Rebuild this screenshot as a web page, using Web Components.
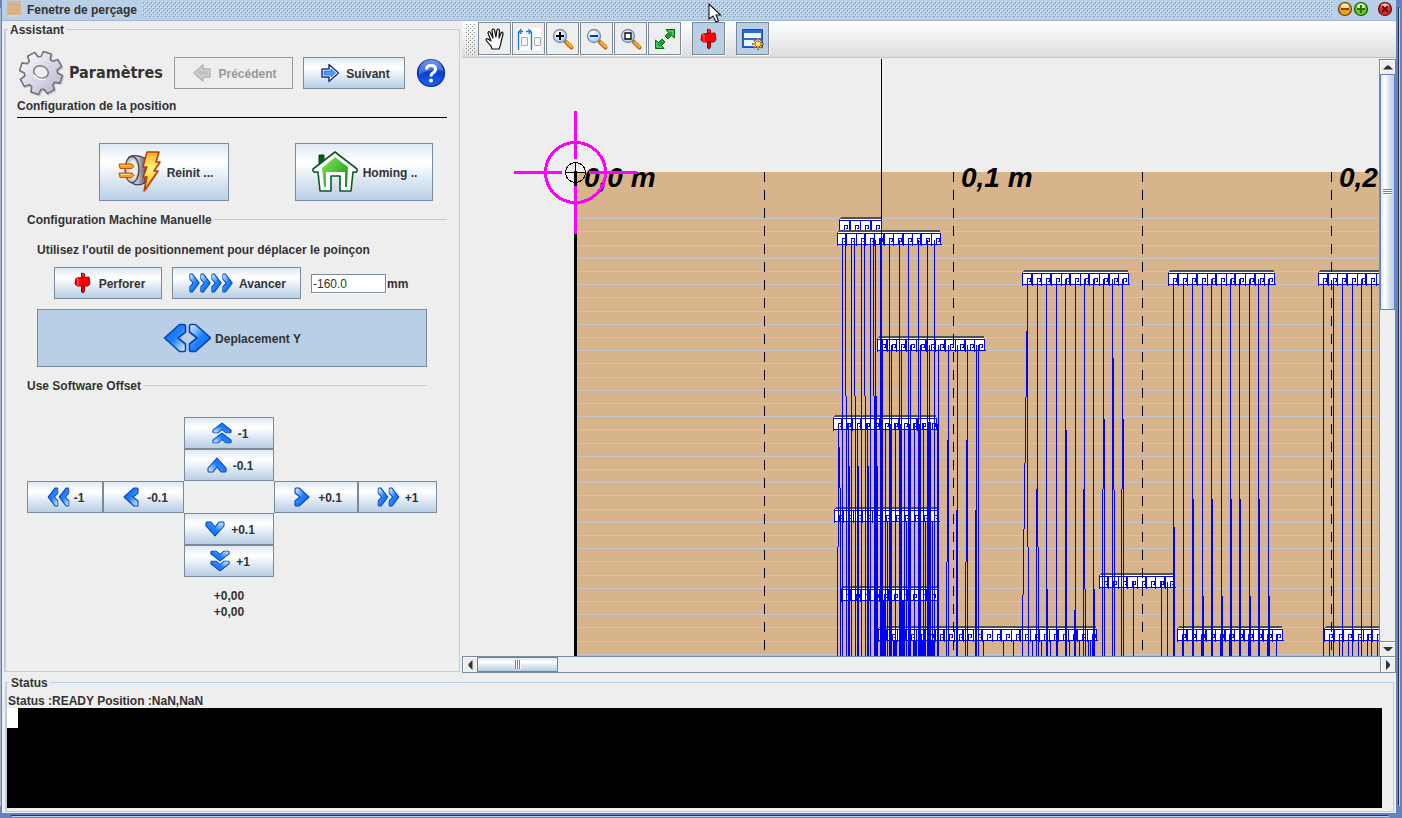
<!DOCTYPE html>
<html lang="fr">
<head>
<meta charset="utf-8">
<title>Fenetre de perçage</title>
<style>
  html, body { margin: 0; height: 100%; background: #eee; }
  body { font: bold 12px/16px "Liberation Sans", Arial, sans-serif; color: #333; }
</style>
</head>
<body>
<drill-window></drill-window>

<script>
/* ---------- icons ---------- */
const blueGrad = `<linearGradient id="b" x1="0" y1="0" x2="1" y2="1"><stop offset="0" stop-color="#e4f4ff"/><stop offset=".3" stop-color="#6db4ff"/><stop offset=".5" stop-color="#1f80ff"/><stop offset="1" stop-color="#0a6cf8"/></linearGradient>`;
const chev = (x, y, rot = 0, sx = 1, sy = 1) =>
  `<path transform="translate(${x} ${y}) rotate(${rot}) scale(${sx} ${sy})" d="M-7-8Q-7-9-6-9L-3-9L7 0L-3 9L-6 9Q-7 9-7 8L-7 4L-2 0L-7-4Z" fill="url(#b)" stroke="#0c40b4" stroke-width="1.1" stroke-linejoin="round"/>`;
const lens = inner => `<defs><radialGradient id="l" cx=".4" cy=".3" r=".8"><stop offset="0" stop-color="#fff"/><stop offset="1" stop-color="#8fc3f5"/></radialGradient></defs>
  <path d="M14.500 14.500L20.500 20.500" stroke="#b8641c" stroke-width="4" stroke-linecap="round"/><path d="M15 14.500L20.500 20" stroke="#ffb029" stroke-width="2.200" stroke-linecap="round"/><path d="M13 13L15 15" stroke="#777" stroke-width="2"/>
  <circle cx="9" cy="9" r="6.500" fill="url(#l)" stroke="#7b8ba6" stroke-width="1.300"/>${inner}`;
const pin = `<path d="M10.500 2L13.500 3V6H10.500Z" fill="#e33" stroke="#a00"/><path d="M5 7L18 6L19 13L17 15H6L4 13Z" fill="#f00" stroke="#b40000"/><path d="M5 7L7 8V15" fill="none" stroke="#ff7070"/><path d="M10.500 15.500H13.500V20L12 22L10.500 21Z" fill="#e00" stroke="#8c0000"/>`;
const arrowR = (fill, line, mid) => `<path d="M4 8H11V3.500L20.500 12L11 20.500V16H4Z" fill="#fff" stroke="${line}" stroke-width="1.500" stroke-linejoin="round"/><path d="M6 10H13V8L17.500 12L13 16V14H6Z" fill="${fill}" stroke="${mid}" stroke-width=".8"/>`;
const gearPath = (() => {
  let d = '';
  for (let i = 0; i < 8; i++) {
    [[-.3, 16.5], [-.19, 21.500], [.19, 21.500], [.3, 16.5]].forEach(([o, r], k) => {
      const t = i * Math.PI / 4 + o + .3;
      d += (i + k ? 'L' : 'M') + (24 + r * Math.cos(t)).toFixed(1) + ' ' + (24 + r * Math.sin(t)).toFixed(1);
    });
  }
  return d + 'Z';
})();
const ICONS = {
  gear: [48, 48, `<defs><linearGradient id="g" x1="0" y1="0" x2="1" y2="1"><stop offset="0" stop-color="#fff"/><stop offset="1" stop-color="#b4b4cc"/></linearGradient></defs>
    <path transform="translate(1 1)" d="${gearPath}" fill="#bbb" stroke="#ccc" stroke-width="2" stroke-linejoin="round"/>
    <path d="${gearPath}" fill="url(#g)" stroke="#73737f" stroke-width="1.600" stroke-linejoin="round"/>
    <ellipse cx="24" cy="23" rx="7.500" ry="6" transform="rotate(20 24 23)" fill="#eee" stroke="#77778a" stroke-width="1.500"/><path d="M17 26Q21 32 29 30" fill="none" stroke="#fff" stroke-width="1.500"/>`],
  prev: [24, 24, `<g transform="matrix(-1 0 0 1 24 0)"><path d="M4 8H11V4L20 12L11 20V16H4Z" fill="#d4d4d4" stroke="#b4b4b4" stroke-width="1.500" stroke-linejoin="round"/><path d="M6 10H13V8L17 12L13 16V14H6Z" fill="#c2c2c2"/></g>`],
  next: [24, 24, arrowR('#48a0ff', '#1c2f96', '#1c62d8')],
  help: [32, 32, `<defs><linearGradient id="h" x1="0" y1="0" x2="0" y2="1"><stop offset="0" stop-color="#3c7df0"/><stop offset=".5" stop-color="#0b3fd0"/><stop offset="1" stop-color="#1c66f4"/></linearGradient></defs>
    <circle cx="16" cy="16" r="13.500" fill="url(#h)" stroke="#0a2a96" stroke-width="1.200"/><path d="M4 14A12 12 0 0 1 28 14Q16 10 4 18Z" fill="#fff" opacity=".22"/>
    <path d="M11.500 12.500Q11.500 8.500 16 8.500T20.500 12Q20.500 14.500 18 16Q16 17 16 19.500" fill="none" stroke="#fff" stroke-width="3"/><circle cx="16" cy="23.500" r="2" fill="#fff"/>`],
  plug: [48, 48, `<defs><linearGradient id="p" x1="0" y1="0" x2="1" y2="0"><stop offset="0" stop-color="#f4f4f8"/><stop offset=".6" stop-color="#b4b4c4"/><stop offset="1" stop-color="#65656f"/></linearGradient><linearGradient id="y" x1="0" y1="0" x2="0" y2="1"><stop offset="0" stop-color="#ffb020"/><stop offset=".4" stop-color="#fff27a"/><stop offset="1" stop-color="#ffb400"/></linearGradient></defs>
    <path d="M14 9Q20 6 30 10V35Q21 39 16 34Z" fill="url(#p)" stroke="#44444e" stroke-width="1.200"/>
    <ellipse cx="17" cy="21.500" rx="7" ry="13" fill="#c9c9d6" stroke="#444" stroke-width="1.300"/><ellipse cx="18" cy="21.500" rx="4.500" ry="9.500" fill="#eee"/>
    <path d="M4 16H17L19 18.500L17 20.500H5Z M4 25H17L19 27.500L17 29.500H5Z" fill="#ffa01c" stroke="#bf5300"/><path d="M6 17.500H15M6 26.500H15" stroke="#ffe27a"/>
    <path d="M32 5H45L41 15H46L38 25H43L30 45L33 30H28L32 21H28Z" fill="#888" opacity=".5"/>
    <path d="M32 4H44L41 14H45L39 23H43L29 43L32 29H28L32 19H28Z" fill="url(#y)" stroke="#c03a00" stroke-width="1.500" stroke-linejoin="round"/>`],
  home: [48, 48, `<defs><linearGradient id="r" x1="0" y1="0" x2="1" y2="1"><stop offset="0" stop-color="#8be85c"/><stop offset="1" stop-color="#07930c"/></linearGradient></defs>
    <path d="M8 7H13V15L8 19Z" fill="#045a24" stroke="#034018"/>
    <path d="M24 4L46 21Q47 25 42 24L40 43H29V28H20V43H9L7 24Q1 25 2 21Z" fill="#fff" stroke="#0b5a24" stroke-width="1.600" stroke-linejoin="round"/>
    <path d="M24 9L37 19L36 39H34V24H15V39H13L11 20Z" fill="url(#r)"/>`],
  pin: [24, 24, pin],
  adv: [48, 24, `<defs>${blueGrad}</defs>` + [7.5, 18.5, 29.5, 40.5].map(x => chev(x, 12, 0, .68, 1)).join('')],
  depY: [48, 32, `<defs>${blueGrad}</defs>` + chev(12, 16, 180, 1.5, 1.5) + chev(37, 16, 0, 1.5, 1.5)],
  up2: [24, 24, `<defs>${blueGrad}</defs>` + chev(12, 7, -90, .7, 1) + chev(12, 17, -90, .7, 1)],
  up: [24, 24, `<defs>${blueGrad}</defs>` + chev(12, 12, -90)],
  down: [24, 24, `<defs>${blueGrad}</defs>` + chev(12, 12, 90)],
  down2: [24, 24, `<defs>${blueGrad}</defs>` + chev(12, 7, 90, .7, 1) + chev(12, 17, 90, .7, 1)],
  left: [24, 24, `<defs>${blueGrad}</defs>` + chev(12, 12, 180)],
  left2: [24, 24, `<defs>${blueGrad}</defs>` + chev(7, 12, 180, .7, 1) + chev(18, 12, 180, .7, 1)],
  right: [24, 24, `<defs>${blueGrad}</defs>` + chev(12, 12)],
  right2: [24, 24, `<defs>${blueGrad}</defs>` + chev(6, 12, 0, .7, 1) + chev(17, 12, 0, .7, 1)],
  hand: [24, 24, `<path d="M9 22L8 19Q5 16 3 13Q3 11 5 12L8 14L5 6Q5 4 7 5L10 11L9 3Q10 1 11.500 3L13 10L14 3Q15 1 16.500 3L16 11L18 6Q20 4 20 7L18 15Q18 18 16 22Z" fill="#fff" stroke="#111" stroke-width="1.200" stroke-linejoin="round"/>`],
  dist: [24, 24, `<path fill="#fff" d="M0 1H24V23H0Z"/><path d="M1.500 5V23M14.500 5V23" stroke="#1478f0" stroke-width="1.400"/><path d="M2 4.500H6M9 4.500H14M4.500 2L2 4.500L4.500 7M11.500 2L14 4.500L11.500 7" fill="none" stroke="#1478f0" stroke-width="1.300"/><path d="M4.500 10.500H10.500V18.500H4.500ZM17.500 10.500H23.500V18.500H17.500Z" fill="#f6f6f6" stroke="#aaa"/>`],
  zin: [24, 24, lens('<path d="M5 9H13M9 5V13" stroke="#000" stroke-width="2"/>')],
  zout: [24, 24, lens('<path d="M5 9H13" stroke="#10389c" stroke-width="2"/>')],
  zbox: [24, 24, lens('<path d="M6 6H12V12H6Z" fill="#fff" stroke="#000" stroke-width="1.300"/>')],
  fit: [24, 24, `<path d="M13 2.500H21.500V11L18.500 8.500L15 12L12 9L15.500 5.500Z" fill="#19a22c" stroke="#0a6a18"/><path d="M2.500 13V21.500H11L8.500 18.500L12 15L9 12L5.500 15.500Z" fill="#19a22c" stroke="#0a6a18"/><path d="M15 4H20V9M4 15V20H9" fill="none" stroke="#7fe08a"/>`],
  form: [24, 24, `<path d="M1.500 2.500H21.500V20.500H1.500Z" fill="#2868d8" stroke="#1b4cae"/><path d="M3 6H20V11H3ZM3 13H20V19H3Z" fill="#f0f6ff"/><path d="M17 11V23M11 17H23M13 13L21 21M21 13L13 21" stroke="#a8641a" stroke-width="2"/><path d="M17 12V22M12 17H22M14 14L20 20M20 14L14 20" stroke="#ffc74a"/><circle cx="17" cy="17" r="2" fill="#fff3b0"/>`],
  board: [16, 16, `<path fill="#d9b38c" d="M0 0H14V14H0Z"/><path d="M1 3H6M8 4H13M2 8H5M7 9H12M1 12H9" stroke="#cfa67c"/><path d="M0 15H14" stroke="#eadcc8"/>`],
  min: [16, 16, `<circle cx="8" cy="8" r="6.500" fill="#e8a020" stroke="#6a3a10" stroke-width="1.200"/><ellipse cx="8" cy="5" rx="4" ry="2.500" fill="#fff0a0"/><path d="M4 8H12" stroke="#a33a00" stroke-width="2"/>`],
  max: [16, 16, `<circle cx="8" cy="8" r="6.500" fill="#6cc62c" stroke="#1f4a10" stroke-width="1.200"/><ellipse cx="8" cy="5" rx="4" ry="2.500" fill="#e0ffb0"/><path d="M4 8H12M8 4V12" stroke="#1f7a00" stroke-width="2"/>`],
  close: [16, 16, `<circle cx="8" cy="8" r="6.500" fill="#cc3030" stroke="#601010" stroke-width="1.200"/><ellipse cx="8" cy="5" rx="4" ry="2.500" fill="#ffb8b0"/><path d="M5 5L11 11M11 5L5 11" stroke="#700" stroke-width="2"/>`],
  cursor: [16, 24, `<path d="M1 1V16L5 13L8 19L10.500 18L8 12H12.500Z" fill="#fff" stroke="#111" stroke-width="1.100"/>`]
};

class MetalIcon extends HTMLElement {
  connectedCallback() {
    if (this.shadowRoot) return;
    const [w, h, body] = ICONS[this.getAttribute('name')];
    this.attachShadow({ mode: 'open' }).innerHTML =
      `<style>:host{display:inline-block;flex:none;line-height:0}svg{display:block}</style>
       <svg width="${w}" height="${h}" viewBox="0 0 ${w} ${h}" aria-hidden="true">${body}</svg>`;
  }
}
customElements.define('metal-icon', MetalIcon);

/* ---------- push button: icon attribute + label slot ---------- */
class MetalButton extends HTMLElement {
  connectedCallback() {
    if (this.shadowRoot) return;
    const off = this.hasAttribute('disabled') ? 'disabled' : '';
    const label = this.getAttribute('label');
    this.attachShadow({ mode: 'open' }).innerHTML = `
      <style>
        :host { display: block; height: 32px; }
        :host([tall]) { height: 58px; }
        button { box-sizing: border-box; width: 100%; height: 100%; margin: 0; padding: 0; display: flex; align-items: center; justify-content: center; gap: 4px;
          font: inherit; color: inherit; white-space: nowrap; border: 1px solid #7a8a99; background: linear-gradient(#dde8f3, #fff 30%, #fff 34%, #dce7f2 65%, #b8cfe5); }
        button:disabled { background: #eee; color: #999; border-color: #999; }
        span { padding-top: 2px; }
        :host([pressed]) button { background: #b8cfe5; }
        :host([tool]) { width: 34px; height: 34px; flex: none; }
        :host([tool]) button { width: 33px; height: 33px; background: #eee; box-shadow: 1px 1px #fff; }
        :host([tool][pressed]) button { background: #b8cfe5; }
        :host([flat]) button { border: 0; background: none; }
      </style>
      <button type="button" ${off} ${label ? `aria-label="${label}"` : ''}><metal-icon name="${this.getAttribute('icon')}"></metal-icon>${label ? '' : '<span><slot></slot></span>'}</button>`;
  }
}
customElements.define('metal-button', MetalButton);

/* ---------- titled border ---------- */
class MetalGroup extends HTMLElement {
  constructor() {
    super();
    this.attachShadow({ mode: 'open' }).innerHTML = `
      <style>
        :host { display: flex; min-width: 0; }
        fieldset { flex: 1; min-width: 0; box-sizing: border-box; margin: 0; padding: 0; border: 1px solid #b8cfe5; border-left-width: 2px; }
        legend { margin-left: 2px; padding: 0 2px; line-height: 16px; height: 14px; }
      </style>
      <fieldset><legend><slot name="legend"></slot></legend><slot></slot></fieldset>`;
  }
}
customElements.define('metal-group', MetalGroup);

/* ---------- section heading followed by a rule ---------- */
class MetalHeading extends HTMLElement {
  constructor() {
    super();
    this.attachShadow({ mode: 'open' }).innerHTML = `
      <style>
        :host { display: block; }
        h3 { margin: 0; font: inherit; line-height: 16px; height: 14px; display: flex; gap: 2px; white-space: nowrap; }
        h3::after { content: ""; flex: 1; height: 1px; margin-top: 7px; background: #b8cfe5; }
      </style><h3><slot></slot></h3>`;
  }
}
customElements.define('metal-heading', MetalHeading);

/* ---------- scroll bar ---------- */
class MetalScrollbar extends HTMLElement {
  connectedCallback() {
    if (this.shadowRoot) return;
    const v = this.hasAttribute('vertical');
    const arrow = d => `<svg width="10" height="10" viewBox="0 0 10 10" aria-hidden="true"><path d="${d}" fill="#333"/></svg>`;
    this.attachShadow({ mode: 'open' }).innerHTML = `
      <style>
        :host { display: grid; background: #eee; border: solid #7a8a99; ${v
          ? 'grid-template-rows: 14px 236px 1fr 15px; width: 15px; border-width: 1px 1px 0 1px;'
          : 'grid-template-columns: 14px 81px 1fr 16px; height: 15px; border-width: 1px 0 1px 1px;'} }
        button { margin: 0; padding: 0; display: flex; align-items: center; justify-content: center; background: #eee; border: 0; box-shadow: inset 1px 1px #fff; }
        .end { border: solid #7a8a99; border-width: ${v ? '1px 0 0' : '0 1px'}; }
        .thumb { border: 1px solid #6382bf; display: flex; align-items: center; justify-content: center; background: linear-gradient(${v ? 'to right' : 'to bottom'}, #dde8f3, #fff 30%, #dce7f2 60%, #b8cfe5); }
        .grip { ${v ? 'width: 9px; height: 6px' : 'width: 6px; height: 9px'}; background: repeating-linear-gradient(${v ? 'to bottom' : 'to right'}, #6382bf 0 1px, #fff 1px 2px); }
      </style>
      <button type="button" aria-label="Début">${arrow(v ? 'M0 7.500H10L6 3.500H4Z' : 'M7.500 0V10L3.500 6V4Z')}</button>
      <div class="thumb"><div class="grip"></div></div><div></div>
      <button class="end" type="button" aria-label="Fin">${arrow(v ? 'M0 3H10L6 7H4Z' : 'M3 0V10L7 6V4Z')}</button>`;
  }
}
customElements.define('metal-scrollbar', MetalScrollbar);

/* ---------- title bar ---------- */
const dots = (a, b) => `url("data:image/svg+xml,${encodeURIComponent(`<svg xmlns='http://www.w3.org/2000/svg' width='4' height='4' shape-rendering='crispEdges'><path fill='${a}' d='M0 0h1v1H0zM2 2h1v1H2z'/><path fill='${b}' d='M1 1h1v1H1zM3 3h1v1H3z'/></svg>`)}")`;
class MetalTitlebar extends HTMLElement {
  constructor() {
    super();
    this.attachShadow({ mode: 'open' }).innerHTML = `
      <style>
        :host { display: flex; align-items: center; height: 20px; background: #b8cfe5; border-bottom: 1px solid #9db8d8; padding: 0 3px 0 5px; }
        h1 { margin: 0 5px 0 4px; font: inherit; line-height: 18px; }
        metal-icon { margin-bottom: 2px; }
        .bumps { flex: 1; height: 16px; margin: 0 4px 2px 0; background: ${dots('#e4effa', '#6387dc')}; }
        button { margin: 0; padding: 0; border: 0; background: none; width: 16px; height: 19px; }
        .close { margin-left: 8px; }
      </style>
      <metal-icon name="board"></metal-icon><h1><slot></slot></h1><div class="bumps"></div>
      <button type="button" aria-label="Réduire"><metal-icon name="min"></metal-icon></button>
      <button type="button" aria-label="Agrandir"><metal-icon name="max"></metal-icon></button>
      <button class="close" type="button" aria-label="Fermer"><metal-icon name="close"></metal-icon></button>`;
  }
}
customElements.define('metal-titlebar', MetalTitlebar);

/* ---------- assistant form ---------- */
class DrillAssistant extends HTMLElement {
  constructor() {
    super();
    this.attachShadow({ mode: 'open' }).innerHTML = `
      <style>
        :host { display: block; padding: 13px 12px 0 11px; }
        .head { display: flex; align-items: center; height: 48px; gap: 10px; }
        .title { flex: 1; display: flex; align-items: center; gap: 4px; min-width: 0; white-space: nowrap; }
        h2 { margin: 0; font: bold 16px/24px "DejaVu Sans Condensed", "Noto Sans", sans-serif; }
        .sub { margin: 0; padding: 1px 0 3px; border-bottom: 1px solid #000; }
        .actions { display: flex; justify-content: space-between; margin-top: 25px; padding: 0 14px 0 82px; }
        .body { padding-left: 10px; }
        metal-heading { margin-top: 11px; }
        .inset { margin-right: 20px; }
        .manual { padding-left: 10px; margin-right: 20px; }
        .hint { margin: 16px 0 9px; white-space: nowrap; }
        .move { display: flex; align-items: center; gap: 10px; padding-left: 17px; margin-bottom: 10px; }
        .field { display: flex; align-items: center; gap: 1px; }
        label { padding-top: 2px; }
        input { box-sizing: border-box; width: 75px; height: 19px; margin: 0; padding: 1px 1px 0; font: 12px "Liberation Sans", Arial, sans-serif; color: #333; border: 1px solid #7a8a99; background: #fff; outline: 0; box-shadow: 1px 1px #fff; }
        .pad { display: grid; grid-template-columns: 76px 81px 90px 84px 79px; grid-auto-rows: 32px; margin-top: 25px; }
        .c { grid-column: 3; }
        .first { grid-column: 1; }
        .mid { grid-column: 4; }
        .out { grid-column: 3; margin-top: 11px; text-align: center; }
        output { display: block; }
        .w119 { width: 119px; } .w102 { width: 102px; } .w130 { width: 130px; } .w138 { width: 138px; } .w108 { width: 108px; } .w129 { width: 129px; }
      </style>
      <div class="head">
        <div class="title"><metal-icon name="gear"></metal-icon><h2>Paramètres</h2></div>
        <metal-button class="w119" icon="prev" disabled>Précédent</metal-button>
        <metal-button class="w102" icon="next">Suivant</metal-button>
        <metal-button flat icon="help" label="Aide"></metal-button>
      </div>
      <p class="sub">Configuration de la position</p>
      <div class="actions">
        <metal-button class="w130" tall icon="plug">Reinit ...</metal-button>
        <metal-button class="w138" tall icon="home">Homing ..</metal-button>
      </div>
      <div class="body">
        <metal-heading>Configuration Machine Manuelle</metal-heading>
        <div class="manual">
          <p class="hint">Utilisez l'outil de positionnement pour déplacer le poinçon</p>
          <div class="move">
            <metal-button class="w108" icon="pin">Perforer</metal-button>
            <metal-button class="w129" icon="adv">Avancer</metal-button>
            <div class="field"><input id="dist" type="text" value="-160.0"><label for="dist">mm</label></div>
          </div>
          <metal-button tall pressed icon="depY">Deplacement Y</metal-button>
        </div>
        <metal-heading class="inset">Use Software Offset</metal-heading>
        <div class="pad">
          <metal-button class="c" icon="up2">-1</metal-button>
          <metal-button class="c" icon="up">-0.1</metal-button>
          <metal-button class="first" icon="left2">-1</metal-button>
          <metal-button icon="left">-0.1</metal-button>
          <metal-button class="mid" icon="right">+0.1</metal-button>
          <metal-button icon="right2">+1</metal-button>
          <metal-button class="c" icon="down">+0.1</metal-button>
          <metal-button class="c" icon="down2">+1</metal-button>
          <div class="out"><output>+0,00</output><output>+0,00</output></div>
        </div>
      </div>`;
  }
}
customElements.define('drill-assistant', DrillAssistant);

/* ---------- toolbar ---------- */
class DrillToolbar extends HTMLElement {
  constructor() {
    super();
    this.attachShadow({ mode: 'open' }).innerHTML = `
      <style>
        :host { display: flex; height: 35px; padding: 1px 0 0 3px; background: linear-gradient(#fff, #ddd); border-bottom: 1px solid #c4c4c4; margin-bottom: 1px; }
        .grab { width: 10px; margin: 1px 3px 1px 0; background: ${dots('#fff', '#888')}; }
        i { width: 10px; }
      </style>
      <div class="grab"></div>
      <metal-button tool icon="hand" label="Déplacer"></metal-button><metal-button tool icon="dist" label="Distance"></metal-button>
      <metal-button tool icon="zin" label="Zoom avant"></metal-button><metal-button tool icon="zout" label="Zoom arrière"></metal-button>
      <metal-button tool icon="zbox" label="Zoom zone"></metal-button><metal-button tool icon="fit" label="Ajuster"></metal-button><i></i>
      <metal-button tool pressed icon="pin" label="Perforer"></metal-button><i></i>
      <metal-button tool pressed icon="form" label="Assistant"></metal-button>`;
  }
}
customElements.define('drill-toolbar', DrillToolbar);

/* ---------- punching plan (drawn in window units, shifted to the view origin) ---------- */
class DrillPlan extends HTMLElement {
  constructor() {
    super();
    let board = '';
    for (let n = 0; n < 60; n++) board += `<path d="M577 ${Math.floor(218.6 + 13.2 * n) + .5}H2400" stroke="#c4c4cc"/>`;
    /* pipe rows: left, right, top */
    const rows = [[839, 881, 217], [837, 940, 230], [877, 984, 336], [833, 936, 415], [834, 938, 507], [841, 937, 586], [878, 1096, 626], [1099, 1174, 573],
      [1022, 1128, 270], [1168, 1274, 270], [1318, 1424, 270], [1177, 1282, 626], [1324, 1430, 626]];
    const boxes = rows.map(([a, b, t]) => {
      let s = `<path d="M${a} ${t + 14}V${t + 2}L${a + 2} ${t}H${b}V${t + 14}Z" fill="#505050"/><path d="M${a + 1} ${t + 2}H${b}V${t + 14}H${a + 1}Z" fill="#fff"/>`;
      let p = `M${a + .5} ${t + 16}V${t + 3.5}H${b + .5}V${t + 15}M${a} ${t + 14.5}H${b + 2}`;
      const n = Math.round((b - a) / 9.5), st = (b - a) / n;
      for (let i = 0; i < n; i++) {
        const x = Math.round(a + i * st);
        if (i) p += `M${x + .5} ${t + 3}V${t + 16}`;
        if (i % 2) p += `M${x - .5} ${t + 3}V${t + 15}`;
        p += `M${x + 5.5} ${t + 15}V${t + 8.5}H${x + 8}V${t + 11}M${x + 7} ${t + 11.5}H${x + 9}`;
      }
      return s + `<path d="${p}" fill="none" stroke="#00f"/>`;
    }).join('');
    /* punch tracks: x, from, to, width */
    const B = 657, L = [];
    const add = (xs, a, b = B, w = 1) => xs.forEach(x => L.push([x, a, b, w]));
    add([845, 854, 864], 240, 396); add([846, 855, 865], 396);
    add([842, 851, 861, 870, 875, 889, 899, 908, 918, 927, 934], 240);
    add([873], 240, 396); add([874], 396, B, 3);
    add([881], 219); add([880], 238, B, 2); add([882], 340);
    add([891, 901, 910, 920, 929, 938, 976, 978], 345);
    add([948], 345, 562); add([947], 440, 562); add([946, 948], 562);
    add([967], 345, 562); add([966], 440, 562); add([965, 967], 562);
    add([957], 345); add([956, 975], 510);
    add([838], 424, 547); add([839], 447, 488); add([840], 488); add([837], 547);
    add([848, 857, 867, 885, 895, 904, 914, 923], 424);
    add([849, 858, 868, 877], 466);
    add([890, 900, 909, 919], 424); add([927], 422, B, 4); add([937], 424, B, 2);
    add([887, 906, 925, 932], 522);
    add([893, 913, 921, 930], 641, B, 4); add([883, 902], 600, B, 2);
    add([1027], 279, 547); add([1028], 547); add([1026], 331, 397); add([1025], 397, 463); add([1024], 463, 529); add([1023], 529, 595); add([1022], 595);
    add([1037], 279, 547); add([1038], 547); add([1036], 489);
    add([1046, 1056, 1065, 1075, 1093, 1112], 279);
    add([1047, 1085, 1094], 589); add([1066], 430); add([1074], 610);
    add([1084], 279, 589); add([1083], 489);
    add([1103, 1122], 279, 489); add([1104, 1123], 419); add([1102, 1121], 489); add([1113], 358, 490); add([1114], 490);
    add([1133, 1161, 1167], 582);
    add([1173, 1183, 1192, 1202, 1211, 1221, 1230, 1239, 1249, 1258, 1268], 279);
    add([1174], 527); add([1193, 1212, 1231, 1240, 1259], 499); add([1203, 1222, 1250, 1269], 596);
    add([1182, 1201, 1220, 1229, 1248, 1267], 634); add([1276], 634);
    add([1323, 1333, 1342, 1352, 1361, 1371], 279); add([1329, 1339, 1348, 1358, 1367, 1377], 634);
    add([983, 1003, 1013, 1032, 1041, 1050, 1057, 1069, 1079, 1088, 1090, 1092, 1094], 641);
    const tracks = L.map(([x, a, b, w]) => `M${x} ${a}h${w}V${b}h${-w}Z`).join('');
    this.attachShadow({ mode: 'open' }).innerHTML = `
      <style>:host{display:block;overflow:hidden;min-width:0;min-height:0;background:#eee;position:relative} svg{position:absolute;width:100%;height:100%;display:block}
      text{font:italic bold 28px "Liberation Sans",Arial,sans-serif;fill:#000}</style>
      <svg role="img" aria-label="Plan de perçage"><g transform="translate(-462 -59)" shape-rendering="crispEdges">
        <path d="M575 172H2400V1200H575Z" fill="#d8b48c"/>${board}
        <path d="M574 171H577V1200H574Z"/>
        <text x="584" y="187">0,0 m</text><text x="961" y="187">0,1 m</text><text x="1339" y="187">0,2</text>
        <path d="M881.5 59V220" stroke="#000"/>
        ${boxes}<path d="${tracks}" fill="#00f"/>
        <path d="M764.5 172V651M953.5 172V651M1142.5 172V651M1331.500 172V651" stroke="#000" stroke-dasharray="10 8"/>
        <path d="M514 172.500H562M589 172.500H637M575.500 111V159M575.500 186V234" stroke="#f0f" stroke-width="3"/>
        <circle cx="575.500" cy="172.500" r="30" fill="none" stroke="#f0f" stroke-width="3"/>
        <circle cx="575.500" cy="172.500" r="10" fill="none" stroke="#000"/><path d="M565 172.500H586M575.500 162V183" stroke="#000"/><path fill="#ff0" d="M577 174h2v1h-2z"/>
      </g></svg>`;
  }
}
customElements.define('drill-plan', DrillPlan);

/* ---------- status output ---------- */
class DrillStatus extends HTMLElement {
  constructor() {
    super();
    this.attachShadow({ mode: 'open' }).innerHTML = `
      <style>
        :host { display: block; padding: 3px 11px 3px 0; }
        p { margin: 0 0 0 1px; height: 16px; line-height: 18px; }
        .log { height: 100px; background: #000; }
        .caret { width: 11px; height: 20px; background: #fff; }
      </style><p><slot></slot></p><div class="log" role="log"><div class="caret"></div></div>`;
  }
}
customElements.define('drill-status', DrillStatus);

/* ---------- whole window ---------- */
class DrillWindow extends HTMLElement {
  constructor() {
    super();
    this.attachShadow({ mode: 'open' }).innerHTML = `
      <style>
        :host { box-sizing: border-box; display: flex; min-height: 100vh; padding: 0 6px 5px 2px; position: relative;
          background:
            linear-gradient(#333, #333) right 3px top 7px / 1px calc(100% - 20px) no-repeat,
            linear-gradient(#b8cfe5, #b8cfe5) right 2px top 8px / 1px calc(100% - 20px) no-repeat,
            linear-gradient(#333, #333) left 11px bottom 2px / calc(100% - 25px) 1px no-repeat,
            linear-gradient(#b8cfe5, #b8cfe5) left 12px bottom 1px / calc(100% - 25px) 1px no-repeat,
            linear-gradient(#a4b8d4, #a4b8d4) left 0 top 8px / 1px calc(100% - 20px) no-repeat, #6382bf; }
        .frame { flex: 1; min-width: 0; display: flex; flex-direction: column; background: #eee; }
        .main { flex: 1; display: grid; grid-template-columns: 458px minmax(0, 1fr); gap: 2px; min-height: 0; }
        .side { margin: 1px 0 1px 2px; }
        .view { display: grid; grid-template-rows: auto minmax(0, 1fr) auto; min-width: 0; }
        .pane { display: grid; grid-template-columns: minmax(0, 1fr) auto; }
        .status { margin: 2px 2px 1px 3px; }
        .cursor { position: absolute; left: 708px; top: 3px; }
      </style>
      <div class="frame">
        <metal-titlebar>Fenetre de perçage</metal-titlebar>
        <div class="main">
          <metal-group class="side"><span slot="legend">Assistant</span><drill-assistant></drill-assistant></metal-group>
          <div class="view">
            <drill-toolbar></drill-toolbar>
            <div class="pane"><drill-plan></drill-plan><metal-scrollbar vertical></metal-scrollbar></div>
            <metal-scrollbar></metal-scrollbar>
          </div>
        </div>
        <metal-group class="status"><span slot="legend">Status</span><drill-status>Status :READY Position :NaN,NaN</drill-status></metal-group>
      </div>
      <metal-icon class="cursor" name="cursor"></metal-icon>`;
  }
}
customElements.define('drill-window', DrillWindow);
</script>
</body>
</html>
